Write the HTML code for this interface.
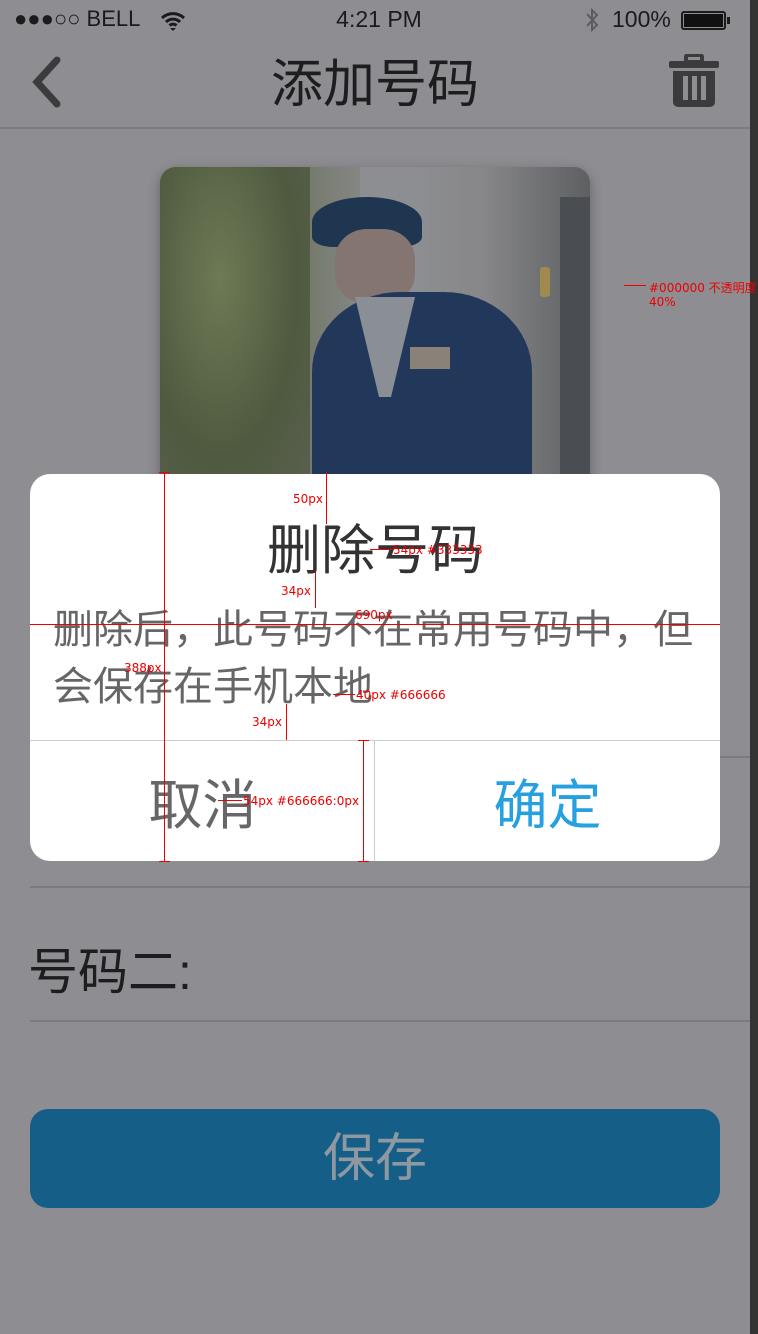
<!DOCTYPE html>
<html><head><meta charset="utf-8"><style>
*{margin:0;padding:0;box-sizing:border-box}
body{width:758px;height:1334px;background:#8e8d92;position:relative;overflow:hidden;font-family:"Liberation Sans","Noto Sans CJK SC",sans-serif}
.a{position:absolute}
.cn{font-family:"Liberation Sans","Noto Sans CJK SC",sans-serif;white-space:nowrap}
.line{position:absolute;height:2px;background:#7c7b80}
.r{position:absolute;background:#e00}
.rt{position:absolute;color:#e00;font-size:12px;font-family:"DejaVu Sans",sans-serif;white-space:nowrap}
</style></head><body>
<div class="a" style="left:750px;top:0;width:8px;height:1334px;background:#333"></div>
<!-- status bar -->
<div class="a" style="left:14px;top:6px;font-size:22px;color:#1b1b1d;white-space:nowrap">●●●○○ BELL</div>
<svg class="a" style="left:160px;top:10px" width="26" height="22" viewBox="0 0 26 22"><path d="M2 8a16 16 0 0 1 22 0M6 12a10 10 0 0 1 14 0M9.5 15.5a5 5 0 0 1 7 0" stroke="#1b1b1d" stroke-width="3" fill="none"/><path d="M13 21l-3-3h6z" fill="#1b1b1d"/></svg>
<div class="a" style="left:0;width:758px;top:6px;text-align:center;font-size:23px;color:#1b1b1d">4:21 PM</div>
<svg class="a" style="left:583px;top:7px" width="18" height="26" viewBox="0 0 18 26"><path d="M4 7l10 11-5 5V3l5 5L4 19" stroke="#5c5c60" stroke-width="2" fill="none"/></svg>
<div class="a" style="left:612px;top:6px;font-size:23px;color:#1b1b1d">100%</div>
<div class="a" style="left:681px;top:11px;width:45px;height:19px;border:2px solid #1b1b1d;border-radius:3px;padding:1px"><div style="width:100%;height:100%;background:#111"></div></div>
<div class="a" style="left:727px;top:17px;width:3px;height:7px;background:#1b1b1d"></div>
<!-- nav -->
<svg class="a" style="left:28px;top:56px" width="36" height="52" viewBox="0 0 36 52"><path d="M29 4L9 26l20 22" stroke="#3b3b3e" stroke-width="7" stroke-linecap="round" fill="none"/></svg>
<div class="a cn" style="left:0;width:750px;top:52px;text-align:center;font-size:52px;color:#1d1d1f;line-height:66px">添加号码</div>
<svg class="a" style="left:668px;top:54px" width="52" height="54" viewBox="0 0 52 54"><rect x="18" y="1" width="16" height="7" rx="2" fill="none" stroke="#3b3b3e" stroke-width="4"/><rect x="1" y="7" width="50" height="7" rx="2" fill="#3b3b3e"/><path d="M5 17h42v31a5 5 0 0 1-5 5H10a5 5 0 0 1-5-5z" fill="#3b3b3e"/><rect x="15" y="22" width="5" height="24" fill="#8e8d92"/><rect x="24" y="22" width="5" height="24" fill="#8e8d92"/><rect x="33" y="22" width="5" height="24" fill="#8e8d92"/></svg>
<div class="a" style="left:0;top:127px;width:750px;height:2px;background:#7c7b80"></div>
<!-- photo -->
<div class="a" style="left:160px;top:167px;width:430px;height:320px;border-radius:16px 16px 0 0;overflow:hidden;background:linear-gradient(90deg,#5e6457 0%,#6f7563 30%,#8f9094 55%,#878789 75%,#5d5f62 100%);box-shadow:0 4px 12px rgba(0,0,0,.3)">
<div class="a" style="left:0;top:0;width:150px;height:320px;background:radial-gradient(ellipse at 40% 35%,#6d7a55 0%,#4f5a3f 60%,#5a6050 100%)"></div>
<div class="a" style="left:200px;top:0;width:60px;height:120px;background:#8d8e91"></div>
<div class="a" style="left:400px;top:30px;width:30px;height:290px;background:#4a4d52"></div>
<div class="a" style="left:380px;top:100px;width:10px;height:30px;background:#a08a50;border-radius:3px"></div>
<div class="a" style="left:152px;top:30px;width:110px;height:50px;background:#1f3650;border-radius:50% 50% 20% 20%"></div>
<div class="a" style="left:175px;top:62px;width:80px;height:75px;background:#857570;border-radius:40%"></div>
<div class="a" style="left:152px;top:125px;width:220px;height:200px;background:#22385a;border-radius:40% 40% 0 0"></div>
<div class="a" style="left:195px;top:130px;width:60px;height:100px;background:#8a8f96;clip-path:polygon(0 0,100% 0,60% 100%,40% 100%)"></div>
<div class="a" style="left:250px;top:180px;width:40px;height:22px;background:#8a8278"></div>
</div>
<!-- dialog -->
<div class="a" style="left:30px;top:474px;width:690px;height:387px;background:#fff;border-radius:20px;overflow:hidden">
<div class="a cn" style="left:0;width:690px;top:42px;text-align:center;font-size:54px;color:#333;line-height:70px">删除号码</div>
<div class="a cn" style="left:23px;top:128px;font-size:40px;color:#666;line-height:57px;white-space:normal;width:650px">删除后，此号码不在常用号码中，但会保存在手机本地</div>
<div class="a" style="left:0;top:266px;width:690px;height:1px;background:#ccc"></div>
<div class="a" style="left:344px;top:267px;width:1px;height:120px;background:#ccc"></div>
<div class="a cn" style="left:0;width:345px;top:297px;text-align:center;font-size:54px;color:#666;line-height:70px">取消</div>
<div class="a cn" style="left:345px;width:345px;top:297px;text-align:center;font-size:54px;color:#27a0e0;line-height:70px">确定</div>
</div>
<!-- behind below dialog -->
<div class="a" style="left:30px;top:886px;width:720px;height:2px;background:#7c7b80"></div>
<div class="a" style="left:30px;top:756px;width:720px;height:2px;background:#7c7b80;z-index:-1"></div>
<div class="a cn" style="left:28px;top:940px;font-size:50px;color:#1d1d1f;line-height:64px">号码二:</div>
<div class="a" style="left:30px;top:1020px;width:720px;height:2px;background:#7c7b80"></div>
<div class="a" style="left:30px;top:1109px;width:690px;height:99px;background:#145e88;border-radius:18px"></div>
<div class="a cn" style="left:30px;width:690px;top:1126px;text-align:center;font-size:52px;color:#8e98a0;line-height:66px">保存</div>
<!-- annotations -->
<div class="r" style="left:164px;top:472px;width:1px;height:390px"></div>
<div class="r" style="left:159px;top:472px;width:11px;height:1px"></div>
<div class="r" style="left:159px;top:861px;width:11px;height:1px"></div>
<div class="rt" style="left:124px;top:661px">388px</div>
<div class="r" style="left:326px;top:472px;width:1px;height:52px"></div>
<div class="rt" style="left:293px;top:492px">50px</div>
<div class="r" style="left:315px;top:572px;width:1px;height:36px"></div>
<div class="rt" style="left:281px;top:584px">34px</div>
<div class="r" style="left:30px;top:624px;width:690px;height:1px"></div>
<div class="rt" style="left:355px;top:608px">690px</div>
<div class="rt" style="left:393px;top:543px">54px #333333</div>
<div class="r" style="left:370px;top:549px;width:24px;height:1px"></div>
<div class="rt" style="left:356px;top:688px">40px #666666</div>
<div class="r" style="left:333px;top:694px;width:22px;height:1px"></div>
<div class="r" style="left:286px;top:704px;width:1px;height:36px"></div>
<div class="rt" style="left:252px;top:715px">34px</div>
<div class="r" style="left:363px;top:740px;width:1px;height:122px"></div>
<div class="r" style="left:358px;top:740px;width:11px;height:1px"></div>
<div class="r" style="left:358px;top:861px;width:11px;height:1px"></div>
<div class="rt" style="left:243px;top:794px">54px #666666:0px</div>
<div class="r" style="left:218px;top:800px;width:24px;height:1px"></div>
<div class="r" style="left:624px;top:285px;width:22px;height:1px"></div>
<div class="rt" style="left:649px;top:279px">#000000 不透明度</div>
<div class="rt" style="left:649px;top:295px">40%</div>
</body></html>
